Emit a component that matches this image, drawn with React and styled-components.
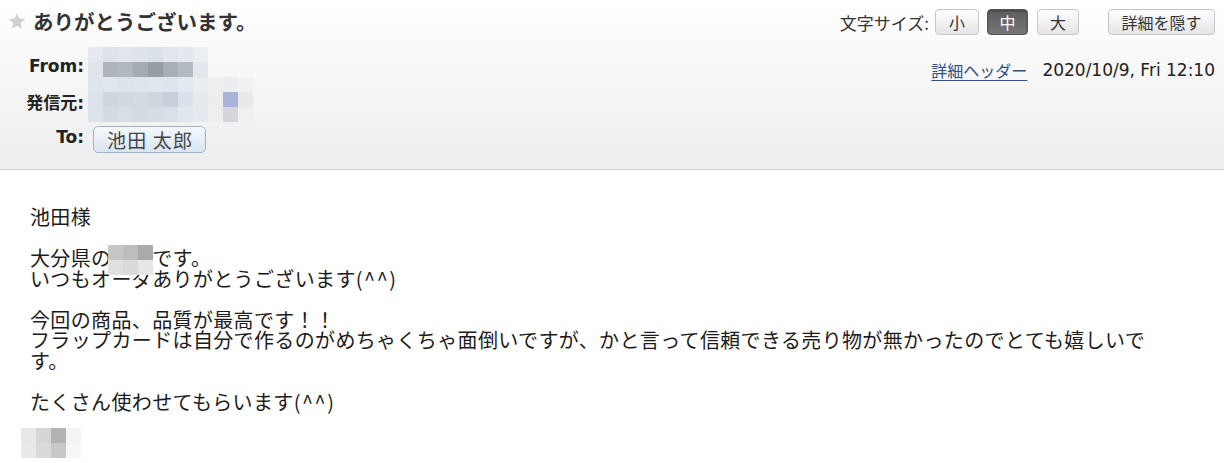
import React from 'react';
import styled, { createGlobalStyle } from 'styled-components';

const GlobalStyle = createGlobalStyle`
  html, body { margin: 0; padding: 0; background: #fff; overflow: hidden; }
  body { font-family: "Noto Sans CJK JP", sans-serif; color: #1e1e1e; }
`;

const Page = styled.div`
  width: 1224px;
  height: 463px;
  overflow: hidden;
  display: flex;
  flex-direction: column;
`;

const Header = styled.header`
  display: flex;
  justify-content: space-between;
  height: 170px;
  box-sizing: border-box;
  padding: 8px 9px 0 8px;
  background: linear-gradient(#ffffff, #ededed);
  border-bottom: 1px solid #cdcdcd;
  flex-shrink: 0;
`;

const LeftCol = styled.div`
  display: flex;
  flex-direction: column;
`;

const TitleRow = styled.div`
  display: flex;
  align-items: center;
  height: 26px;
  gap: 7px;
`;

const Title = styled.h1`
  margin: 0;
  font-family: "Noto Sans CJK JP", sans-serif;
  font-size: 20.5px;
  font-weight: 700;
  color: #333;
  line-height: 26px;
`;

const Fields = styled.div`
  margin-top: 14px;
  display: grid;
  grid-template-columns: 76px auto;
  grid-template-rows: 36px 34px 38px;
  column-gap: 4px;
`;

const Label = styled.div`
  font-family: "DejaVu Sans", "Noto Sans CJK JP", sans-serif;
  font-weight: 700;
  font-size: 17px;
  color: #222;
  text-align: right;
  align-self: center;
  grid-column: 1;
  grid-row: ${p => p.$row};
  white-space: nowrap;
`;

const SenderMosaic = styled.div`
  grid-column: 2;
  grid-row: 1 / span 2;
  align-self: start;
  margin-top: -1px;
  height: 75px;
`;

const RecipientCell = styled.div`
  grid-column: 2;
  grid-row: 3;
  display: flex;
  align-items: center;
  padding-left: 5px;
  padding-top: 5px;
`;

const Chip = styled.span`
  display: inline-flex;
  align-items: center;
  height: 27px;
  box-sizing: border-box;
  padding: 0 12px 0 13px;
  border: 1px solid #9db3cb;
  border-radius: 5px;
  background: linear-gradient(#f5f9fd, #d9e5f1);
  font-size: 19px;
  color: #444;
  letter-spacing: 1.2px;
  white-space: pre;
`;

const RightCol = styled.div`
  display: flex;
  flex-direction: column;
  align-items: flex-end;
`;

const Toolbar = styled.div`
  display: flex;
  align-items: center;
  height: 26px;
  margin-top: 1px;
`;

const ToolLabel = styled.span`
  font-size: 17px;
  color: #333;
  margin-right: 6px;
  white-space: nowrap;
`;

const Button = styled.button`
  width: ${p => p.$w}px;
  height: 26px;
  margin-left: ${p => p.$gap}px;
  padding: 0;
  box-sizing: border-box;
  border-radius: 4px;
  font-family: "Noto Sans CJK JP", sans-serif;
  font-size: 16px;
  line-height: 1;
  cursor: pointer;
  border: 1px solid ${p => (p.$active ? '#555' : '#c6c6c6')};
  color: ${p => (p.$active ? '#fff' : '#333')};
  background: ${p =>
    p.$active
      ? 'linear-gradient(#5c5c5c, #777777)'
      : 'linear-gradient(#fefefe, #e5e5e5)'};
  box-shadow: ${p => (p.$active ? 'inset 0 1px 2px rgba(0,0,0,0.35)' : '0 1px 0 rgba(255,255,255,0.8)')};
`;

const Meta = styled.div`
  display: flex;
  align-items: center;
  height: 20px;
  margin-top: 25px;
`;

const HeaderLink = styled.a`
  font-size: 16px;
  color: #2d4f86;
  text-decoration: underline;
  text-underline-offset: 3px;
  cursor: pointer;
`;

const DateText = styled.span`
  font-family: "DejaVu Sans", sans-serif;
  font-size: 17px;
  color: #222;
  margin-left: 15px;
  white-space: nowrap;
`;

const Body = styled.main`
  padding: 37px 64px 0 30px;
  font-size: 20px;
  letter-spacing: 0.36px;
  line-height: 20.5px;
  color: #1c1c1c;
`;

const Paragraph = styled.p`
  margin: 0 0 20.5px 0;
`;

const Hidden = styled.span`
  position: relative;
  color: transparent;
`;

const HiddenCover = styled.span`
  position: absolute;
  left: -3px;
  top: 2px;
  line-height: 0;
`;

const Smiley = styled.span`
  letter-spacing: 1.5px;
`;

const Signature = styled.div`
  margin: -5px 0 0 -9px;
  line-height: 0;
`;

function Mosaic({ rows, cell = 15 }) {
  const w = Math.max(...rows.map(r => r.length)) * cell;
  const h = rows.length * cell;
  return (
    <svg width={w} height={h} viewBox={`0 0 ${w} ${h}`} style={{ display: 'block' }}>
      {rows.map((r, y) =>
        r.map((c, x) =>
          c ? <rect key={`${x}-${y}`} x={x * cell} y={y * cell} width={cell} height={cell} fill={c} /> : null
        )
      )}
    </svg>
  );
}

function Star() {
  return (
    <svg width="18" height="18" viewBox="0 0 24 24">
      <path
        d="M12 1.5l3.1 7.2 7.8.7-5.9 5.2 1.8 7.7L12 18.2l-6.8 4.1 1.8-7.7-5.9-5.2 7.8-.7z"
        fill="#d0d0d0"
      />
    </svg>
  );
}

const senderRows = [
  ['#e3e9ef', '#dde3ea', '#e0e6ec', '#dde3ea', '#dbe1e8', '#e0e6ec', '#e2e8ee', '#eaeff4'],
  ['#dfe5eb', '#aeb4bc', '#b2b8c0', '#a5abb3', '#979da5', '#a9afb7', '#b5bbc3', '#e1e7ed'],
  ['#dfe5ec', '#e1e7ee', '#dde3ea', '#dfe5ec', '#e0e6ed', '#dfe5ec', '#e3e9f0', '#e9edf2', '#eeeeee', '#ecedf0', '#f1f1f1'],
  ['#dce2ea', '#cfd6de', '#d2d9e1', '#d4dbe3', '#cfd6de', '#c8cfd8', '#dbe1e9', '#e6eaef', '#ededed', '#a9b3dc', '#e9e9e9'],
  ['#dde3eb', '#d4dbe3', '#d7dee6', '#d3dae2', '#d6dde5', '#d9e0e8', '#e1e7ee', '#e6eaef', '#eeeeee', '#d4d6dc', '#f0f0f0'],
];

const nameRows = [
  ['#c6c6c6', '#bdbdbd', '#aaaaaa'],
  ['#e0e0e0', '#dadada', '#e6e6e6'],
];

const signRows = [
  ['#e8e8e8', '#d5d5d5', '#b3b3b3', '#f4f4f4'],
  ['#e9e9e9', '#d9d9d9', '#c8c8c8', '#f6f6f6'],
];

export default function App() {
  return (
    <Page>
      <GlobalStyle />
      <Header>
        <LeftCol>
          <TitleRow>
            <Star />
            <Title>ありがとうございます。</Title>
          </TitleRow>
          <Fields>
            <Label $row={1}>From:</Label>
            <Label $row={2}>発信元:</Label>
            <SenderMosaic>
              <Mosaic rows={senderRows} />
            </SenderMosaic>
            <Label $row={3}>To:</Label>
            <RecipientCell>
              <Chip>池田 太郎</Chip>
            </RecipientCell>
          </Fields>
        </LeftCol>
        <RightCol>
          <Toolbar>
            <ToolLabel>文字サイズ:</ToolLabel>
            <Button $w={44} $gap={0}>小</Button>
            <Button $w={41} $gap={8} $active>中</Button>
            <Button $w={42} $gap={9}>大</Button>
            <Button $w={107} $gap={29}>詳細を隠す</Button>
          </Toolbar>
          <Meta>
            <HeaderLink>詳細ヘッダー</HeaderLink>
            <DateText>2020/10/9, Fri 12:10</DateText>
          </Meta>
        </RightCol>
      </Header>
      <Body>
        <Paragraph>池田様</Paragraph>
        <Paragraph>
          大分県の<Hidden>
            ○○
            <HiddenCover>
              <Mosaic rows={nameRows} />
            </HiddenCover>
          </Hidden>です。
          <br />
          いつもオーダありがとうございます<Smiley>(^^)</Smiley>
        </Paragraph>
        <Paragraph>
          今回の商品、品質が最高です！！
          <br />
          フラップカードは自分で作るのがめちゃくちゃ面倒いですが、かと言って信頼できる売り物が無かったのでとても嬉しいです。
        </Paragraph>
        <Paragraph>たくさん使わせてもらいます<Smiley>(^^)</Smiley></Paragraph>
        <Signature>
          <Mosaic rows={signRows} />
        </Signature>
      </Body>
    </Page>
  );
}
